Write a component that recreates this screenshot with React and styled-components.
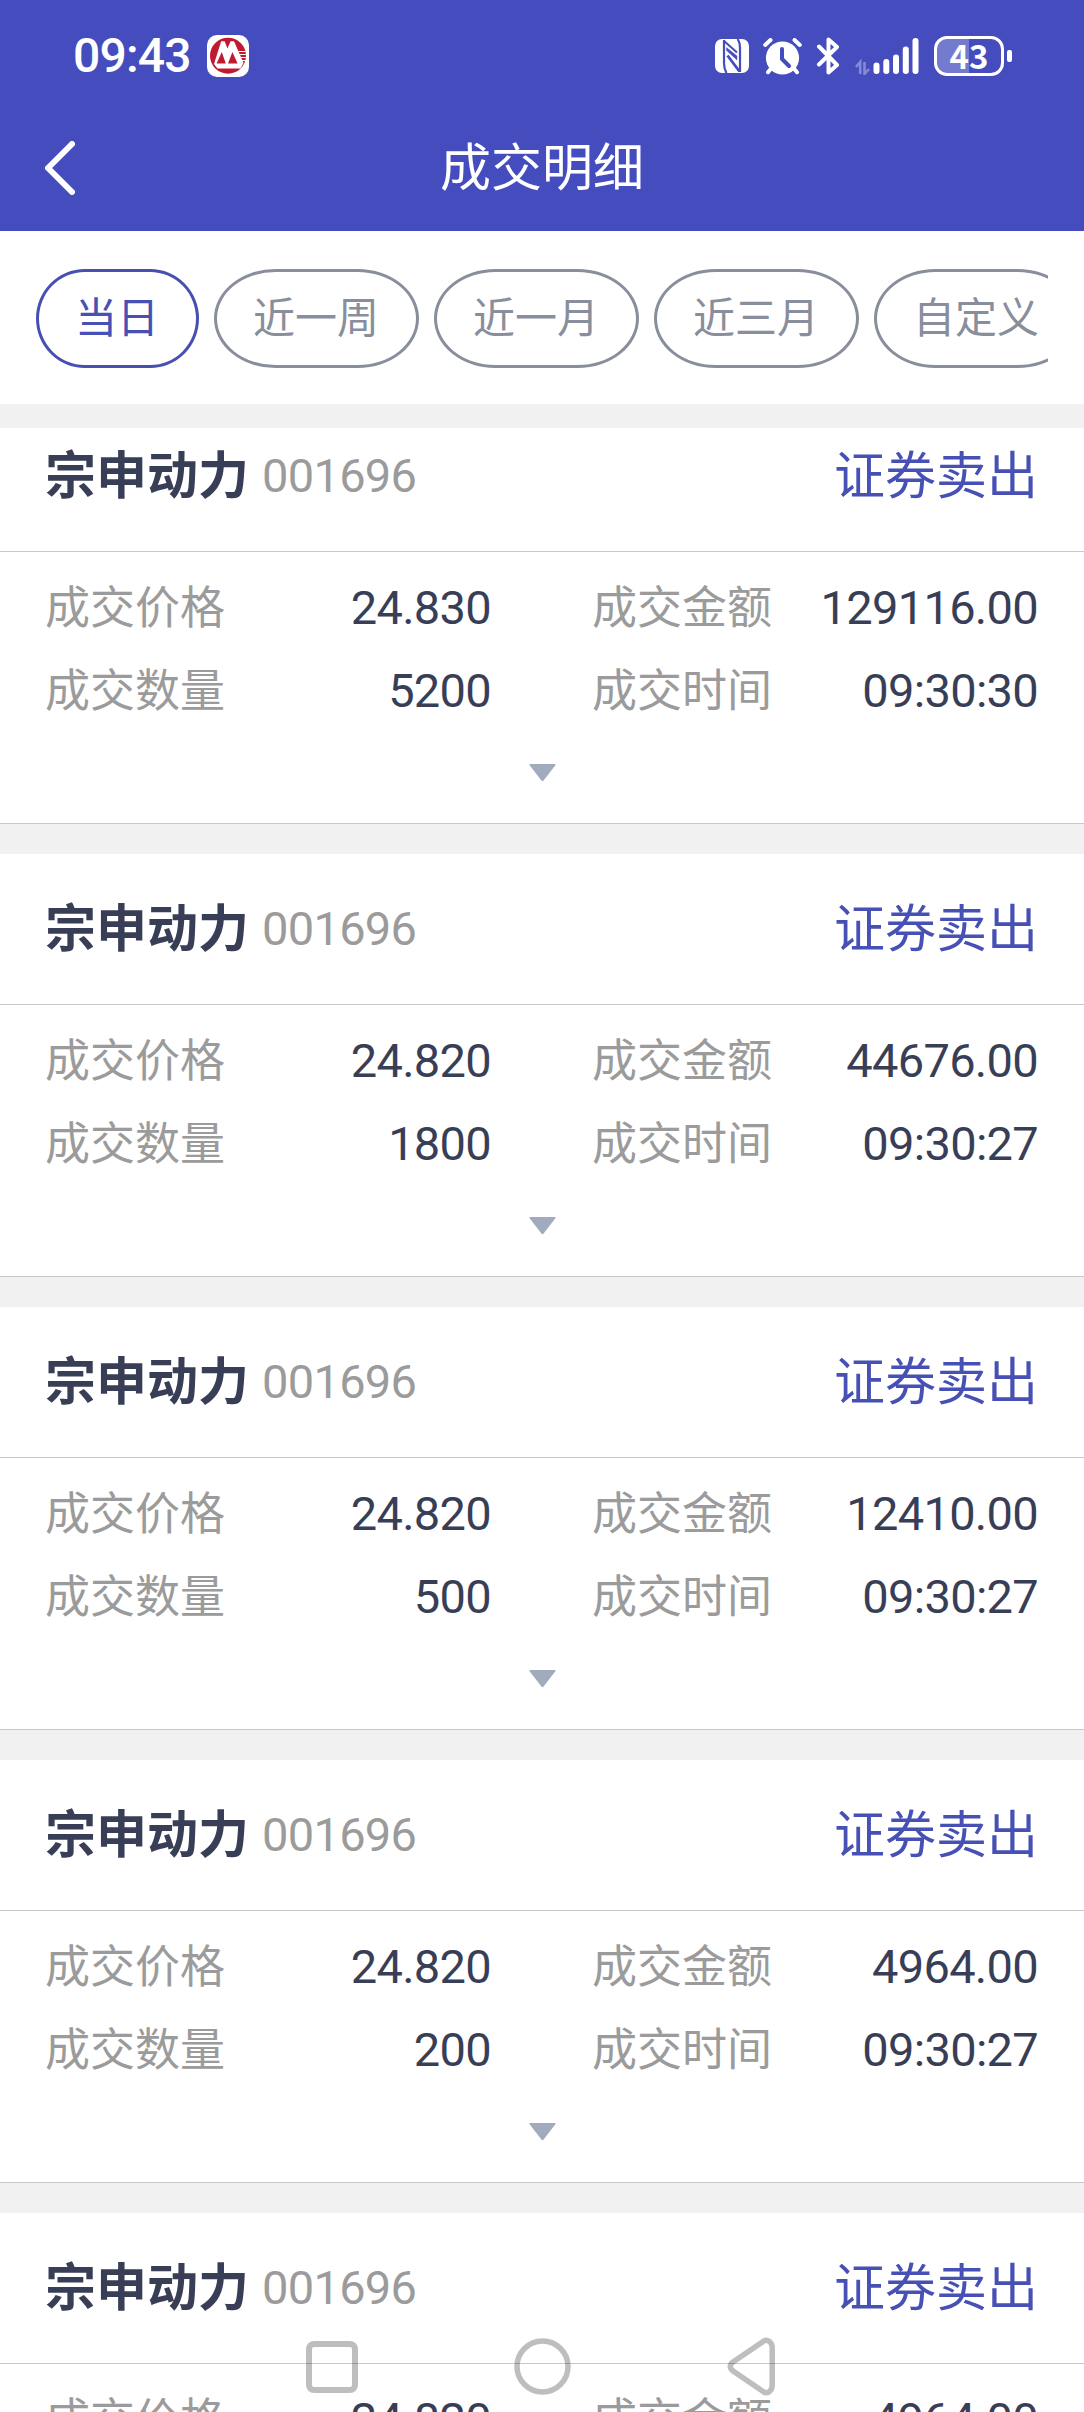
import React from "react";
import styled, { createGlobalStyle } from "styled-components";

const INDIGO = "#444cbe";
const DIGITS = `Roboto, "Noto Sans CJK SC", sans-serif`;

const Global = createGlobalStyle`
  * { box-sizing: border-box; }
  body { margin: 0; background: #fff; }
`;

const Screen = styled.div`
  position: relative;
  width: 1084px;
  height: 2412px;
  overflow: hidden;
  display: flex;
  flex-direction: column;
  background: #fff;
  font-family: "Noto Sans CJK SC", "Noto Sans", sans-serif;
`;

const Top = styled.header`
  flex: none;
  height: 231px;
  background: ${INDIGO};
  color: #fff;
`;

const StatusBar = styled.div`
  height: 104px;
  padding: 10px 72px 0 73px;
  display: flex;
  align-items: center;
  justify-content: space-between;
`;

const StatusGroup = styled.div`
  display: flex;
  align-items: center;
  height: 44px;
  margin-top: -2px;
`;

const Clock = styled.span`
  width: 134px;
  font-family: ${DIGITS};
  font-size: 48px;
  line-height: 44px;
  font-weight: 500;
  letter-spacing: -0.8px;
`;

const Icon = styled.svg`
  display: block;
  flex: none;
  margin-left: ${(p) => p.$gap || 0}px;
`;

const Battery = styled.div`
  width: 70px;
  height: 40px;
  margin-left: 14px;
  padding-bottom: 2px;
  border: 3px solid #fff;
  border-radius: 13px;
  display: flex;
  align-items: center;
  justify-content: center;
  font-size: 33px;
  line-height: 32px;
  font-weight: 700;
  background: linear-gradient(90deg, rgba(255, 255, 255, 0.26) 32px, transparent 32px);
`;

const BatteryTip = styled.div`
  width: 5px;
  height: 12px;
  margin-left: 3px;
  border-radius: 2px;
  background: #fff;
`;

const NavBar = styled.div`
  height: 127px;
  display: grid;
  grid-template-columns: 120px 1fr 120px;
  align-items: center;
`;

const BackButton = styled.button`
  border: 0;
  padding: 0 0 0 45px;
  background: none;
`;

const Title = styled.h1`
  margin: 0;
  padding-bottom: 7px;
  text-align: center;
  font-size: 51px;
  line-height: 60px;
  font-weight: 400;
`;

const Filters = styled.div`
  flex: none;
  height: 173px;
  margin: 0 36px;
  padding-top: 38px;
  display: flex;
  gap: 15px;
  overflow: hidden;
`;

const Chip = styled.button`
  flex: none;
  height: 99px;
  padding: 0 37px 8px 36px;
  border: 3px solid ${(p) => (p.$active ? "#4750b0" : "#898e9c")};
  border-radius: 30% / 50%;
  background: #fff;
  color: ${(p) => (p.$active ? "#4750b4" : "#898e9c")};
  font-family: inherit;
  font-size: 42px;
  line-height: 50px;
`;

const Band = styled.div`
  flex: none;
  height: 24px;
  background: #f1f1f1;
`;

const List = styled.main`
  flex: 1;
  min-height: 0;
  overflow: hidden;
`;

const Scrolled = styled.div`
  margin-top: -27px;
`;

const Card = styled.section`
  height: 453px;
  border-bottom: 30px solid #f1f1f1;
`;

const CardHead = styled.div`
  height: 151px;
  padding: 0 46px 8px 45px;
  border-bottom: 1px solid #c8c8c8;
  display: flex;
  align-items: center;
`;

const StockName = styled.span`
  color: #393e57;
  font-size: 51px;
  line-height: 60px;
  font-weight: 700;
`;

const StockCode = styled.span`
  flex: 1;
  margin-left: 13px;
  padding-top: 8px;
  color: #9b9b9b;
  font-family: ${DIGITS};
  font-size: 47px;
  line-height: 60px;
  letter-spacing: -0.7px;
`;

const Side = styled.span`
  color: #4750b4;
  font-size: 51px;
  line-height: 60px;
`;

const CardBody = styled.div`
  height: 272px;
  padding: 14px 46px 0;
  border-bottom: 1px solid #c8c8c8;
  display: flex;
  flex-direction: column;
`;

const Fields = styled.div`
  display: grid;
  grid-template-columns: 1fr 1fr;
  column-gap: 102px;
  grid-auto-rows: 83px;
`;

const Field = styled.div`
  display: flex;
  justify-content: space-between;
  align-items: center;
  line-height: 60px;
`;

const Label = styled.span`
  margin-left: -1px;
  padding-bottom: 5px;
  color: #9b9b9b;
  font-size: 45px;
`;

const Value = styled.span`
  color: #393e57;
  font-family: ${DIGITS};
  font-size: 47px;
  letter-spacing: -0.7px;
`;

const Expand = styled.svg`
  display: block;
  margin: 32px auto 0;
`;

const SystemNav = styled.nav`
  position: absolute;
  left: 306px;
  bottom: 16px;
  width: 469px;
  height: 59px;
  display: flex;
  align-items: center;
  justify-content: space-between;
  opacity: 0.25;
`;

const CmbLogo = () => (
  <Icon width="42" height="42" viewBox="0 0 42 42">
    <rect width="42" height="42" rx="10" fill="#fff" />
    <circle cx="21" cy="20.7" r="18" fill="#bf1b30" />
    <path d="M7 29 14.2 6.2h3.4L20.5 13.5 23.6 6.2h3.4L36.5 28l-3 5.6H10.5z" fill="#fff" />
    <path d="M9.6 28.4 14.8 17 18.8 28.4zM21 28.4 25.4 17 30.6 28.4z" fill="#bf1b30" />
    <path d="M31.5 16.5h7M32.5 19.5h6.3M33.5 22.5h5.3M34.8 25.5h3.8" stroke="#fff" strokeWidth="1.2" />
  </Icon>
);

const NfcIcon = () => (
  <Icon width="34" height="34" viewBox="0 0 34 34">
    <rect width="34" height="34" rx="7" fill="#fff" />
    <g fill="none" stroke={INDIGO}>
      <path d="M9 1v23q0 6 2.5 10" strokeWidth="2.2" />
      <path d="M8.5 1.5 22 13.5" strokeWidth="2" />
      <path d="M11.5 11.5 22 21v-4L11.5 8.5z" fill={INDIGO} strokeWidth=".4" />
      <path d="M12.5 16.5 24.5 32.5" strokeWidth="2.8" />
      <path d="M22.5 0q2.5 3 2.5 9v24" strokeWidth="2.2" />
    </g>
  </Icon>
);

const AlarmIcon = () => (
  <Icon $gap={14} width="39" height="37" viewBox="0 0 39 37">
    <circle cx="19.5" cy="20" r="16.6" fill="#fff" />
    <path d="M2.2 7 7.5 2M36.8 7 31.5 2M8.5 30 5 34.2M30.5 30l3.5 4.2" stroke="#fff" strokeWidth="4" strokeLinecap="round" />
    <path d="M19 11v10l7 7" fill="none" stroke={INDIGO} strokeWidth="4" strokeLinecap="round" strokeLinejoin="round" />
  </Icon>
);

const BluetoothIcon = () => (
  <Icon $gap={14} width="24" height="38" viewBox="0 0 24 38">
    <path d="M3 9.5 21 28l-8.5 7.5V2.5L21 10 3 27.5" fill="none" stroke="#fff" strokeWidth="4" strokeLinecap="round" strokeLinejoin="round" />
  </Icon>
);

const SignalIcon = () => (
  <Icon $gap={15} width="65" height="38" viewBox="0 0 65 38">
    <path d="M1 30 5.2 25v12M9.5 25v12l4.5-5" fill="none" stroke="#fff" strokeOpacity=".35" strokeWidth="2.6" />
    <g fill="#fff">
      <rect x="18.5" y="25.5" width="6" height="11.5" rx="3" />
      <rect x="28.3" y="22" width="6" height="15" rx="3" />
      <rect x="38" y="17.5" width="6" height="19.5" rx="3" />
      <rect x="47.8" y="9.5" width="6" height="27.5" rx="3" />
      <rect x="57.5" y="1" width="6" height="36" rx="3" />
    </g>
  </Icon>
);

const filters = ["当日", "近一周", "近一月", "近三月", "自定义"];

const trades = [
  { price: "24.830", amount: "129116.00", qty: "5200", time: "09:30:30" },
  { price: "24.820", amount: "44676.00", qty: "1800", time: "09:30:27" },
  { price: "24.820", amount: "12410.00", qty: "500", time: "09:30:27" },
  { price: "24.820", amount: "4964.00", qty: "200", time: "09:30:27" },
  { price: "24.820", amount: "4964.00", qty: "200", time: "09:30:27" },
];

const Entry = ({ label, value }) => (
  <Field>
    <Label>{label}</Label>
    <Value>{value}</Value>
  </Field>
);

const Trade = ({ trade }) => (
  <Card>
    <CardHead>
      <StockName>宗申动力</StockName>
      <StockCode>001696</StockCode>
      <Side>证券卖出</Side>
    </CardHead>
    <CardBody>
      <Fields>
        <Entry label="成交价格" value={trade.price} />
        <Entry label="成交金额" value={trade.amount} />
        <Entry label="成交数量" value={trade.qty} />
        <Entry label="成交时间" value={trade.time} />
      </Fields>
      <Expand width="27" height="18" viewBox="0 0 27 18">
        <path d="M1.5 0h24q1.8 0 .7 1.6L14.6 16.6q-1.1 1.4-2.2 0L.8 1.6Q-.3 0 1.5 0z" fill="#a1abbe" />
      </Expand>
    </CardBody>
  </Card>
);

export default function App() {
  return (
    <Screen>
      <Global />
      <Top>
        <StatusBar>
          <StatusGroup>
            <Clock>09:43</Clock>
            <CmbLogo />
          </StatusGroup>
          <StatusGroup>
            <NfcIcon />
            <AlarmIcon />
            <BluetoothIcon />
            <SignalIcon />
            <Battery>43</Battery>
            <BatteryTip />
          </StatusGroup>
        </StatusBar>
        <NavBar>
          <BackButton aria-label="返回">
            <Icon width="30" height="54" viewBox="0 0 30 54">
              <path d="M27 3 3 27l24 24" fill="none" stroke="#fff" strokeWidth="6" strokeLinecap="round" strokeLinejoin="round" />
            </Icon>
          </BackButton>
          <Title>成交明细</Title>
        </NavBar>
      </Top>
      <Filters>
        {filters.map((name, i) => (
          <Chip key={name} $active={i === 0}>{name}</Chip>
        ))}
      </Filters>
      <Band />
      <List>
        <Scrolled>
          {trades.map((trade, i) => (
            <Trade key={i} trade={trade} />
          ))}
        </Scrolled>
      </List>
      <SystemNav>
        <Icon width="52" height="52" viewBox="0 0 52 52">
          <rect x="3" y="3" width="46" height="46" rx="5" fill="none" stroke="#000" strokeWidth="6" />
        </Icon>
        <Icon width="57" height="57" viewBox="0 0 57 57">
          <circle cx="28.5" cy="28.5" r="25.5" fill="none" stroke="#000" strokeWidth="5.5" />
        </Icon>
        <Icon width="48" height="59" viewBox="0 0 48 59">
          <path d="M36.5 4.2Q40 2 43 5Q45.2 7 45.2 11V48Q45.2 52 43 54Q40 57 36.5 54.8L6 34Q.5 29.5 6 25z" fill="none" stroke="#000" strokeWidth="5.5" strokeLinejoin="round" />
        </Icon>
      </SystemNav>
    </Screen>
  );
}
